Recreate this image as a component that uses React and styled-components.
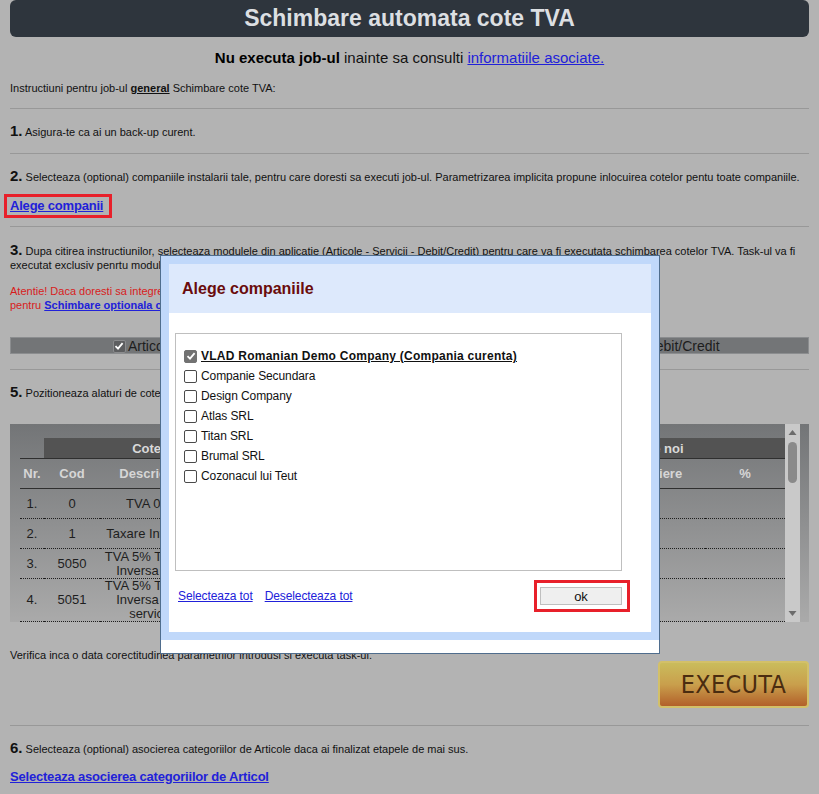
import React from 'react'
import styled, { createGlobalStyle } from 'styled-components'

const GlobalStyle = createGlobalStyle`
  html, body { margin: 0; padding: 0; background: #b3b3b3; }
  body {
    font-family: Tahoma, "Liberation Sans", Arial, sans-serif;
    font-size: 11px;
    color: #111;
  }
`

const companies = [
  'VLAD Romanian Demo Company (Compania curenta)',
  'Companie Secundara',
  'Design Company',
  'Atlas SRL',
  'Titan SRL',
  'Brumal SRL',
  'Cozonacul lui Teut',
]

const rates = [
  ['0', 'TVA 0%'],
  ['1', 'Taxare Inversa'],
  ['5050', 'TVA 5% Taxare Inversa RO'],
  ['5051', 'TVA 5% Taxare Inversa RO servicii'],
  ['5090', 'TVA 9%'],
  ['5190', 'TVA 19%'],
  ['5240', 'TVA 24%'],
  ['6000', 'Scutit cu drept de deducere'],
  ['6001', 'Scutit fara drept de deducere'],
  ['7000', 'Neimpozabil'],
  ['7100', 'Intracomunitar'],
  ['7200', 'Export'],
  ['7300', 'Import'],
  ['7400', 'Servicii UE'],
  ['7500', 'Taxare speciala'],
  ['7600', 'Agentii turism'],
]

const Root = styled.div`
  position: relative;
  min-height: 794px;
`

const Page = styled.div`
  width: 799px;
  margin: 0 10px;
`

const Header = styled.div`
  height: 37px;
  line-height: 37px;
  background: #2e353d;
  border-radius: 6px;
  color: #dcdfe2;
  font-size: 23px;
  font-weight: bold;
  text-align: center;
`

const Notice = styled.div`
  margin-top: 11px;
  text-align: center;
  font-size: 15px;
  line-height: 20px;
  color: #111;
  b { color: #000; }
`

const Link = styled.a`
  color: #2121d9;
  text-decoration: underline;
  cursor: pointer;
  font-weight: ${p => (p.$bold ? 'bold' : 'normal')};
`

const Divider = styled.hr`
  border: 0;
  border-top: 1px solid #989898;
  height: 0;
  margin: ${p => p.$mt}px 0 0;
`

const Step = styled.p`
  margin: ${p => p.$mt}px 0 0;
  font-size: 11px;
  line-height: 14px;
  color: ${p => (p.$alert ? '#d81c1c' : '#111')};
  white-space: nowrap;
`

const Num = styled.b`
  font-size: 15px;
  color: #111;
`

const Strong = styled.b`
  text-decoration: underline;
`

const LinkLine = styled.div`
  margin-top: ${p => p.$mt}px;
  font-size: 13px;
  line-height: 16px;
  letter-spacing: -0.2px;
`

const Marker = styled.span`
  display: inline-block;
  border: 3px solid #e8202a;
  padding: ${p => p.$pad};
  margin: ${p => p.$margin};
  line-height: 16px;
`

const ModuleBar = styled.div`
  margin-top: 25px;
  height: 17px;
  display: grid;
  grid-template-columns: repeat(3, 1fr);
  background: #737577;
  border: 1px solid #8b8d8f;
  box-sizing: border-box;
`

const ModuleCell = styled.label`
  display: flex;
  align-items: center;
  justify-content: center;
  gap: 2px;
  font-size: 14px;
  color: #1d1d1d;
`

const Box = styled.span`
  flex: none;
  display: inline-flex;
  align-items: center;
  justify-content: center;
  width: 13px;
  height: 13px;
  box-sizing: border-box;
  border-radius: 2px;
  border: 1px solid ${p => (p.$checked ? p.$edge : '#4a4a4a')};
  background: ${p => (p.$checked ? p.$fill : '#fff')};
`

const Check = ({ checked, fill = '#727272', edge = '#727272' }) => (
  <Box $checked={checked} $fill={fill} $edge={edge}>
    {checked && (
      <svg width="10" height="10" viewBox="0 0 10 10">
        <path d="M1.5 5.2 L4 7.6 L8.6 2.2" fill="none" stroke="#fff" strokeWidth="1.8" />
      </svg>
    )}
  </Box>
)

const TableBox = styled.div`
  margin-top: 24px;
  height: 198px;
  display: flex;
  padding: 0 9px 0 10px;
  background: linear-gradient(#737577, #aaaaaa);
`

const TableScroll = styled.div`
  flex: 1;
  overflow: hidden;
  padding-top: 14px;
`

const Table = styled.table`
  width: 765px;
  border-collapse: collapse;
  table-layout: fixed;
  font-size: 13px;
  color: #1e1e1e;
`

const GroupTh = styled.th`
  height: 20px;
  padding: 0;
  background: ${p => (p.$blank ? 'transparent' : '#535353')};
  color: #d9d9d9;
  font-size: 13px;
  border-bottom: 1px solid #2f2f2f;
`

const ColTh = styled.th`
  height: 29px;
  padding: 0;
  color: #d6d6d6;
  font-size: 13px;
  border-bottom: 1px solid #2f2f2f;
`

const Td = styled.td`
  height: 29px;
  padding: 0;
  text-align: center;
  line-height: 14px;
  border-bottom: 1px dotted #1e1e1e;
`

const ScrollTrack = styled.div`
  width: 15px;
  background: #c9c9c9;
  display: flex;
  flex-direction: column;
  align-items: center;
`

const Thumb = styled.div`
  width: 9px;
  height: 41px;
  margin-top: 2px;
  border-radius: 5px;
  background: #8a8a8a;
`

const Arrow = ({ down }) => (
  <svg width="15" height="16" viewBox="0 0 15 16" style={{ marginTop: down ? 'auto' : 0 }}>
    <path d={down ? 'M3.5 5 L11.5 5 L7.5 10 Z' : 'M3.5 11 L11.5 11 L7.5 6 Z'} fill="#6b6b6b" />
  </svg>
)

const ExecRow = styled.div`
  margin-top: -1px;
  display: flex;
  justify-content: flex-end;
`

const ExecButton = styled.button`
  width: 151px;
  height: 47px;
  border: 2px solid #d3c068;
  border-radius: 4px;
  background: linear-gradient(#cabc5c, #c99f4c 50%, #b2602a);
  font-family: "DejaVu Sans Condensed", "Liberation Sans Narrow", sans-serif;
  font-size: 25px;
  color: #4a2c10;
  letter-spacing: 0.3px;
  padding: 0;
`

const ModalFrame = styled.div`
  position: absolute;
  left: 160px;
  top: 255px;
  width: 500px;
  box-sizing: border-box;
  background: #fff;
  border: 1px solid #4f6d8d;
  padding-bottom: 13px;
`

const ModalInner = styled.div`
  border: 8px solid #c0d8fa;
`

const ModalHeader = styled.div`
  height: 49px;
  padding-left: 13px;
  display: flex;
  align-items: center;
  background: #dde9fc;
  font-family: "Liberation Sans", Arial, sans-serif;
  font-size: 16px;
  font-weight: bold;
  color: #6a0c0c;
`

const ModalBody = styled.div`
  padding: 20px 29px 27px 6px;
`

const CompanyList = styled.div`
  height: 238px;
  box-sizing: border-box;
  border: 1px solid #bfbfbf;
  padding: 12px 0 0 8px;
`

const CompanyRow = styled.label`
  display: flex;
  align-items: center;
  gap: 4px;
  height: 20px;
  font-size: 12px;
  color: #111;
  font-weight: ${p => (p.$current ? 'bold' : 'normal')};
  text-decoration: ${p => (p.$current ? 'underline' : 'none')};
  letter-spacing: ${p => (p.$current ? '0.25px' : '-0.1px')};
`

const ModalFooter = styled.div`
  margin-top: 16px;
  height: 18px;
  display: flex;
  align-items: center;
  gap: 12px;
  padding-left: 3px;
  font-size: 12px;
  letter-spacing: -0.1px;
`

const OkButton = styled.button`
  display: block;
  width: 82px;
  height: 18px;
  padding: 0;
  border: 1px solid #bfbfbf;
  background: #efefef;
  font-family: inherit;
  font-size: 13px;
  color: #111;
`

export default function App() {
  return (
    <Root>
      <GlobalStyle />
      <Page>
        <Header>Schimbare automata cote TVA</Header>
        <Notice>
          <b>Nu executa job-ul</b> inainte sa consulti <Link>informatiile asociate.</Link>
        </Notice>
        <Step $mt={13}>
          Instructiuni pentru job-ul <Strong>general</Strong> Schimbare cote TVA:
        </Step>
        <Divider $mt={13} />
        <Step $mt={15}>
          <Num>1.</Num> Asigura-te ca ai un back-up curent.
        </Step>
        <Divider $mt={14} />
        <Step $mt={15}>
          <Num>2.</Num> Selecteaza (optional) companiile instalarii tale, pentru care doresti sa executi job-ul. Parametrizarea implicita propune inlocuirea cotelor pentu toate companiile.
        </Step>
        <LinkLine $mt={10}>
          <Marker $pad="1px 6px 1px 3px" $margin="0 0 0 -6px">
            <Link $bold>Alege companii</Link>
          </Marker>
        </LinkLine>
        <Divider $mt={8} />
        <Step $mt={16}>
          <Num>3.</Num> Dupa citirea instructiunilor, selecteaza modulele din aplicatie (Articole - Servicii - Debit/Credit) pentru care va fi executata schimbarea cotelor TVA. Task-ul va fi
          <br />
          executat exclusiv penrtu modulele bifate mai jos.
        </Step>
        <Step $mt={12} $alert>
          Atentie! Daca doresti sa integrezi si categoriile de Articole in schimbarea cotelor TVA, este de preferat sa urmezi procedura
          <br />
          pentru <Link $bold>Schimbare optionala cote TVA pe categorii</Link>.
        </Step>
        <ModuleBar>
          {['Articole', 'Servicii', 'Debit/Credit'].map(m => (
            <ModuleCell key={m}>
              <Check checked fill="#5d5e60" edge="#8a8b8d" />
              {m}
            </ModuleCell>
          ))}
        </ModuleBar>
        <Divider $mt={15} />
        <Step $mt={15}>
          <Num>5.</Num> Pozitioneaza alaturi de cotele vechi noile cote TVA care le vor inlocui.
        </Step>
        <TableBox>
          <TableScroll>
            <Table>
              <colgroup>
                <col style={{ width: 24 }} />
                <col style={{ width: 56 }} />
                <col style={{ width: 98 }} />
                <col style={{ width: 88 }} />
                <col style={{ width: 244 }} />
                <col style={{ width: 70 }} />
                <col style={{ width: 105 }} />
                <col style={{ width: 80 }} />
              </colgroup>
              <thead>
                <tr>
                  <GroupTh $blank />
                  <GroupTh colSpan={3}>Cote vechi</GroupTh>
                  <GroupTh />
                  <GroupTh colSpan={3}>Cote noi</GroupTh>
                </tr>
                <tr>
                  <ColTh>Nr.</ColTh>
                  <ColTh>Cod</ColTh>
                  <ColTh>Descriere</ColTh>
                  <ColTh>%</ColTh>
                  <ColTh />
                  <ColTh>Cod</ColTh>
                  <ColTh>Descriere</ColTh>
                  <ColTh>%</ColTh>
                </tr>
              </thead>
              <tbody>
                {rates.map(([cod, desc], i) => (
                  <tr key={cod}>
                    <Td>{i + 1}.</Td>
                    <Td>{cod}</Td>
                    <Td>{desc}</Td>
                    <Td />
                    <Td />
                    <Td />
                    <Td />
                    <Td />
                  </tr>
                ))}
              </tbody>
            </Table>
          </TableScroll>
          <ScrollTrack>
            <Arrow />
            <Thumb />
            <Arrow down />
          </ScrollTrack>
        </TableBox>
        <Step $mt={26}>
          Verifica inca o data corectitudinea parametrilor introdusi si executa task-ul.
        </Step>
        <ExecRow>
          <ExecButton>EXECUTA</ExecButton>
        </ExecRow>
        <Divider $mt={17} />
        <Step $mt={15}>
          <Num>6.</Num> Selecteaza (optional) asocierea categoriilor de Articole daca ai finalizat etapele de mai sus.
        </Step>
        <LinkLine $mt={13}>
          <Link $bold>Selecteaza asocierea categoriilor de Articol</Link>
        </LinkLine>
      </Page>

      <ModalFrame>
        <ModalInner>
          <ModalHeader>Alege companiile</ModalHeader>
          <ModalBody>
            <CompanyList>
              {companies.map((c, i) => (
                <CompanyRow key={c} $current={i === 0}>
                  <Check checked={i === 0} />
                  {c}
                </CompanyRow>
              ))}
            </CompanyList>
            <ModalFooter>
              <Link>Selecteaza tot</Link>
              <Link>Deselecteaza tot</Link>
              <Marker $pad="4px 5px 4px 3px" $margin="0 -8px 0 auto">
                <OkButton>ok</OkButton>
              </Marker>
            </ModalFooter>
          </ModalBody>
        </ModalInner>
      </ModalFrame>
    </Root>
  )
}
